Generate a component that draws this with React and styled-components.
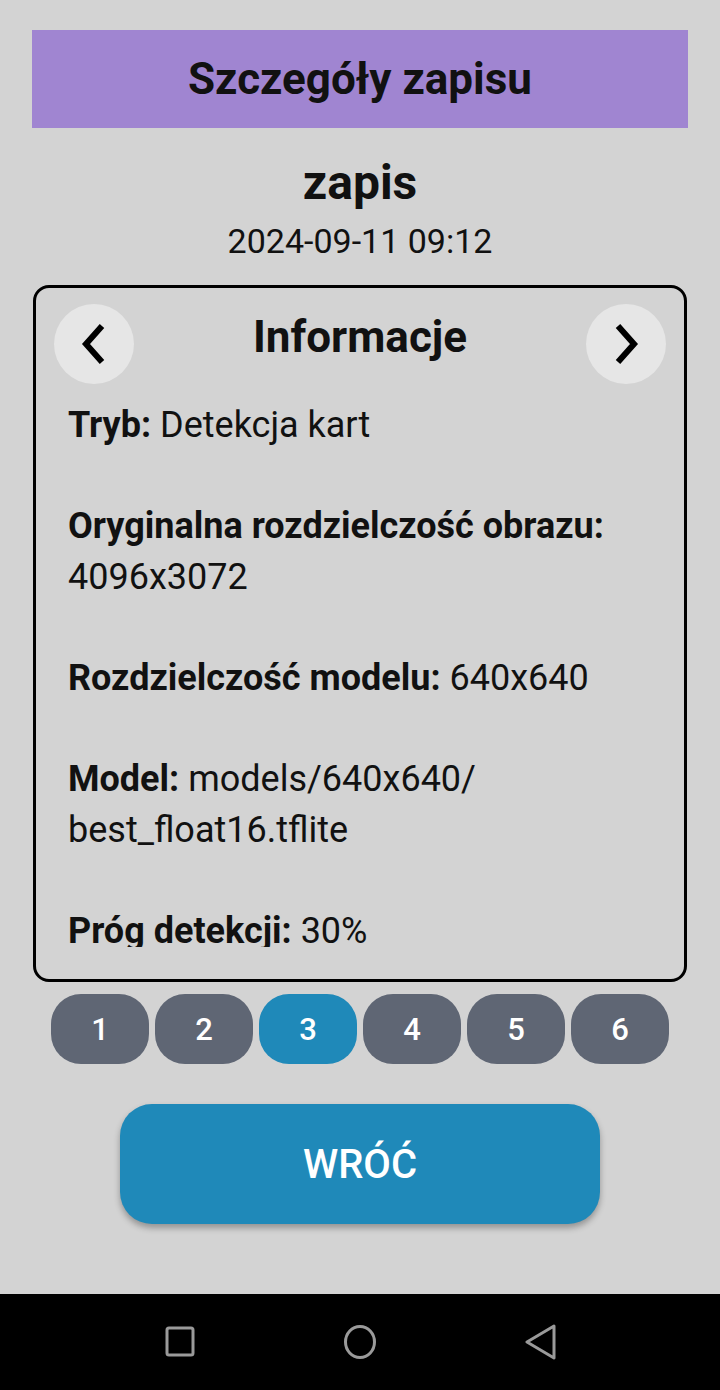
import React from 'react';
import styled, { createGlobalStyle } from 'styled-components';

const GlobalStyle = createGlobalStyle`
    html, body {
        margin: 0;
        padding: 0;
        background: #d3d3d3;
    }
    body {
        font-family: Roboto, "Noto Sans", sans-serif;
        color: #111;
    }
`;

const Screen = styled.div`
    width: 720px;
    height: 1390px;
    display: flex;
    flex-direction: column;
    background: #d3d3d3;
`;

const Content = styled.main`
    flex: 1;
    display: flex;
    flex-direction: column;
    align-items: center;
    padding: 30px 32px 0;
`;

const TopBar = styled.header`
    align-self: stretch;
    height: 98px;
    background: #a085d1;
    display: flex;
    align-items: center;
    justify-content: center;
`;

const TopTitle = styled.h1`
    margin: 0;
    font-size: 44px;
    font-weight: 700;
    color: #111;
`;

const RecordName = styled.h2`
    margin: 27px 0 0;
    font-size: 48px;
    line-height: 56px;
    font-weight: 700;
`;

const RecordDate = styled.div`
    margin-top: 10px;
    font-size: 34px;
    line-height: 40px;
`;

const Card = styled.section`
    align-self: stretch;
    margin: 24px 1px 0;
    height: 697px;
    box-sizing: border-box;
    border: 3px solid #000;
    border-radius: 16px;
    padding: 16px 18px 32px;
    display: flex;
    flex-direction: column;
`;

const CardHead = styled.div`
    display: flex;
    justify-content: space-between;
    align-items: flex-start;
    height: 80px;
`;

const CardTitle = styled.h3`
    margin: 7px 0 0;
    font-size: 44px;
    line-height: 52px;
    font-weight: 700;
`;

const RoundButton = styled.button`
    width: 80px;
    height: 80px;
    border: none;
    border-radius: 50%;
    background: #e6e6e6;
    display: flex;
    align-items: center;
    justify-content: center;
    padding: 0;
`;

const InfoList = styled.div`
    margin-top: 16px;
    flex: 1;
    overflow: hidden;
    padding: 0 14px;
    display: flex;
    flex-direction: column;
    gap: 50px;
`;

const InfoItem = styled.p`
    margin: 0;
    font-size: 36px;
    line-height: 51px;
    b {
        font-weight: 700;
    }
`;

const Pages = styled.div`
    margin-top: 12px;
    display: flex;
    gap: 6px;
`;

const PageButton = styled.button`
    width: 98px;
    height: 70px;
    border: none;
    border-radius: 30px;
    background: ${(p) => (p.$active ? '#1f89b9' : '#5f6674')};
    color: #fff;
    font-family: Roboto, sans-serif;
    font-size: 31px;
    font-weight: 500;
`;

const BackButton = styled.button`
    margin-top: 40px;
    width: 480px;
    height: 120px;
    border: none;
    border-radius: 32px;
    background: #1f89b9;
    color: #fff;
    font-family: Roboto, sans-serif;
    font-size: 40px;
    font-weight: 500;
    box-shadow: 0 4px 6px rgba(0, 0, 0, 0.3);
`;

const NavBar = styled.nav`
    height: 96px;
    background: #000;
    display: flex;
    align-items: center;
    justify-content: center;
    gap: 144px;
`;

const NavIcon = styled.svg`
    width: 36px;
    height: 36px;
    fill: none;
    stroke: #9a9a9a;
    stroke-width: 3;
    stroke-linejoin: round;
`;

const Chevron = ({ dir }) => (
    <svg width="40" height="44" viewBox="0 0 40 44">
        <path
            d={dir === 'left' ? 'M28 4 L12 22 L28 40' : 'M12 4 L28 22 L12 40'}
            fill="none"
            stroke="#000"
            strokeWidth="6"
        />
    </svg>
);

const info = [
    ['Tryb:', 'Detekcja kart'],
    ['Oryginalna rozdzielczość obrazu:', '4096x3072'],
    ['Rozdzielczość modelu:', '640x640'],
    ['Model:', 'models/640x640/ best_float16.tflite'],
    ['Próg detekcji:', '30%'],
];

function App() {
    return (
        <Screen>
            <GlobalStyle />
            <Content>
                <TopBar>
                    <TopTitle>Szczegóły zapisu</TopTitle>
                </TopBar>
                <RecordName>zapis</RecordName>
                <RecordDate>2024-09-11 09:12</RecordDate>
                <Card>
                    <CardHead>
                        <RoundButton><Chevron dir="left" /></RoundButton>
                        <CardTitle>Informacje</CardTitle>
                        <RoundButton><Chevron dir="right" /></RoundButton>
                    </CardHead>
                    <InfoList>
                        {info.map(([label, value]) => (
                            <InfoItem key={label}>
                                <b>{label}</b> {value}
                            </InfoItem>
                        ))}
                    </InfoList>
                </Card>
                <Pages>
                    {[1, 2, 3, 4, 5, 6].map((n) => (
                        <PageButton key={n} $active={n === 3}>{n}</PageButton>
                    ))}
                </Pages>
                <BackButton>WRÓĆ</BackButton>
            </Content>
            <NavBar>
                <NavIcon viewBox="0 0 36 36">
                    <rect x="5" y="4" width="26" height="27" rx="2" />
                </NavIcon>
                <NavIcon viewBox="0 0 36 36">
                    <ellipse cx="18" cy="18" rx="14.5" ry="15.5" />
                </NavIcon>
                <NavIcon viewBox="0 0 36 36">
                    <path d="M32 2 L5 18 L32 34 Z" />
                </NavIcon>
            </NavBar>
        </Screen>
    );
}

export default App;
